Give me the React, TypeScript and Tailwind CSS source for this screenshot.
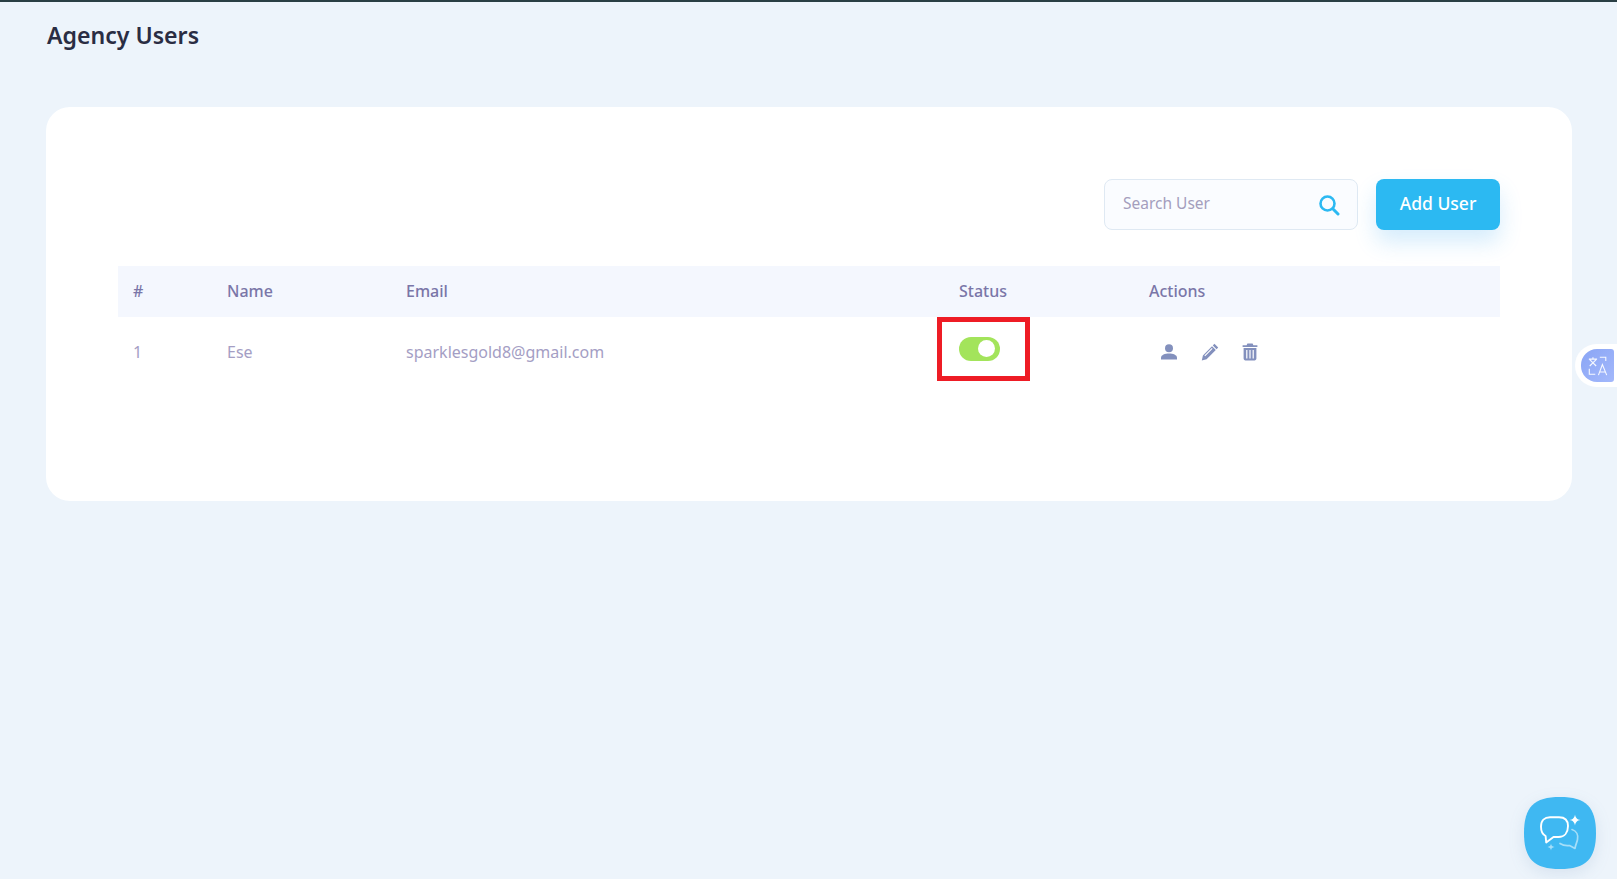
import React from "react";

function SearchIcon() {
  return (
    <svg width="22" height="22" viewBox="0 0 22 22" fill="none" stroke="#2cb9f2" strokeWidth="2.6" strokeLinecap="round">
      <circle cx="9.5" cy="9.5" r="7" />
      <path d="M14.8 14.8 L20 20" strokeWidth="3" />
    </svg>
  );
}

function UserIcon() {
  return (
    <svg width="18" height="18" viewBox="0 0 18 18" fill="#8390bd">
      <circle cx="9" cy="5.2" r="4" />
      <path d="M1 16.5 V14.8 C1 12 5 10.6 9 10.6 C13 10.6 17 12 17 14.8 V16.5 Z" />
    </svg>
  );
}

function PencilIcon() {
  return (
    <svg width="18" height="18" viewBox="0 0 18 18" fill="#8390bd">
      <path d="M13.4 0.8 L17.2 4.6 L15.6 6.2 L11.8 2.4 Z" />
      <path d="M11 3.2 L14.8 7 L5.6 16.2 L0.8 17.4 L1.9 12.4 Z M3.4 12.4 L4.2 13.2 L11.6 5.8 L10.8 5 Z" fillRule="evenodd" />
    </svg>
  );
}

function TrashIcon() {
  return (
    <svg width="16" height="18" viewBox="0 0 16 18" fill="#8390bd">
      <path d="M5.4 0.6 H10.6 L11.4 2.2 H15.4 V4 H0.6 V2.2 H4.6 Z" />
      <path fillRule="evenodd" d="M1.6 5 H14.4 V15.6 C14.4 16.6 13.6 17.4 12.6 17.4 H3.4 C2.4 17.4 1.6 16.6 1.6 15.6 Z M4.2 7 V15.4 H5.4 V7 Z M7.4 7 V15.4 H8.6 V7 Z M10.6 7 V15.4 H11.8 V7 Z" />
    </svg>
  );
}

function TranslateIcon() {
  return (
    <svg width="22" height="22" viewBox="0 0 24 24" fill="none" stroke="#ffffff" strokeWidth="1.2" strokeOpacity="0.92">
      <path d="M2 4.5 H11 M6.5 2.5 V4.5 M3 5 L10 12 M10 5 L3 12" />
      <path d="M14 2.5 H20.5 V6.5" />
      <path d="M2.5 15 V21 H9" />
      <path d="M12.5 22 L16.8 10.5 L21.5 22 M14 18.5 H20" />
    </svg>
  );
}

function ChatWidget() {
  return (
    <svg width="72" height="72" viewBox="0 0 72 72" fill="none" className="drop-shadow-[0_5px_8px_rgba(60,110,160,0.12)]">
      <path d="M36 0 C62 0 72 10 72 36 C72 62 62 72 36 72 C10 72 0 62 0 36 C0 10 10 0 36 0 Z" fill="#3fb8f2" />
      <g transform="translate(14 16)">
        <path d="M12 4.2 H21 C26.5 4.2 30 7.2 30 13 C30 19.5 26.5 24 20.5 24 H15.5 L8.2 29.5 L7.6 23 C4.5 21.5 3 18 3 13.5 C3 7.5 6.5 4.2 12 4.2 Z" stroke="#ffffff" strokeWidth="1.9" strokeLinejoin="round" />
        <path d="M34 16.5 C38.5 18 40.5 22 39.5 26.5 C39 29.5 37.5 31.5 37 35.5 L31.5 32.5 C28 33 25 32.5 22 30.5" stroke="#a5def8" strokeWidth="1.7" strokeLinecap="round" strokeLinejoin="round" />
        <path d="M37 1.5 C37.6 5 39 6.4 42.5 7 C39 7.6 37.6 9 37 12.5 C36.4 9 35 7.6 31.5 7 C35 6.4 36.4 5 37 1.5 Z" fill="#ffffff" />
        <path d="M13 30.5 C13.3 32.6 14.4 33.7 16.5 34 C14.4 34.3 13.3 35.4 13 37.5 C12.7 35.4 11.6 34.3 9.5 34 C11.6 33.7 12.7 32.6 13 30.5 Z" fill="#a5def8" />
      </g>
    </svg>
  );
}

export default function App() {
  return (
    <div
      className="relative h-[879px] overflow-hidden bg-[#edf4fb] border-t-2 border-[#2a3f44] pl-[46px] pr-[45px]"
      style={{ fontFamily: '"Noto Sans", sans-serif' }}
    >
      <h1 className="m-0 mt-[16px] ml-[1px] h-[35px] text-[23.1px] leading-[34px] font-semibold text-[#2a2d43]">Agency Users</h1>

      <div className="mt-[54px] h-[394px] rounded-[24px] bg-white pt-[72px] pl-[72px] pr-[72px]">
        <div className="flex justify-end gap-[18px]">
          <div className="flex h-[51px] w-[254px] items-center justify-between rounded-lg border border-[#dfe9f3] bg-[#fafcff] pl-[18px] pr-[17px]">
            <span className="pb-[2px] text-[15.5px] text-[#a49ebd]">Search User</span>
            <SearchIcon />
          </div>
          <button className="h-[51px] w-[124px] rounded-lg bg-[#2cb9f2] pb-[2px] text-[17.5px] font-medium text-white shadow-[0_12px_22px_rgba(44,160,242,0.2)]">
            Add User
          </button>
        </div>

        <table className="mt-[36px] w-full table-fixed border-collapse text-[16px]">
          <colgroup>
            <col className="w-[94px]" />
            <col className="w-[179px]" />
            <col className="w-[553px]" />
            <col className="w-[190px]" />
            <col />
          </colgroup>
          <thead>
            <tr className="h-[51px] bg-[#f4f7fe] text-left text-[#7a76a8]">
              <th className="pb-[2px] pl-[15px] font-medium">#</th>
              <th className="pb-[2px] pl-[15px] font-medium">Name</th>
              <th className="pb-[2px] pl-[15px] font-medium">Email</th>
              <th className="pb-[2px] pl-[15px] font-medium">Status</th>
              <th className="pb-[2px] pl-[15px] font-medium">Actions</th>
            </tr>
          </thead>
          <tbody>
            <tr className="h-[70px] text-[#a49ec4]">
              <td className="pl-[15px]">1</td>
              <td className="pl-[15px]">Ese</td>
              <td className="pl-[15px]">sparklesgold8@gmail.com</td>
              <td className="pl-[15px]">
                <div className="relative -mt-[7px] flex h-[24px] w-[41px] items-center justify-end rounded-full bg-[#a3e45b] pr-[5px]">
                  <span className="h-[17px] w-[17px] rounded-full bg-white" />
                  <span className="absolute -left-[22px] -top-[20px] h-[64px] w-[93px] border-[5px] border-[#ee1c25]" />
                </div>
              </td>
              <td className="pl-[15px]">
                <div className="flex items-center pl-[11px]">
                  <UserIcon />
                  <span className="ml-[23px]"><PencilIcon /></span>
                  <span className="ml-[23px]"><TrashIcon /></span>
                </div>
              </td>
            </tr>
          </tbody>
        </table>
      </div>

      <div className="absolute right-0 top-[342px] flex h-[43px] w-[42px] items-center rounded-l-full bg-white pl-[6px]">
        <div className="flex h-[33px] w-[33px] items-center justify-center rounded-l-[16px] rounded-r-[3px] bg-linear-to-br from-[#8aa5f5] to-[#a3b8fb]">
          <TranslateIcon />
        </div>
      </div>

      <div className="absolute left-[1524px] top-[795px] h-[72px] w-[72px]">
        <ChatWidget />
      </div>
    </div>
  );
}
